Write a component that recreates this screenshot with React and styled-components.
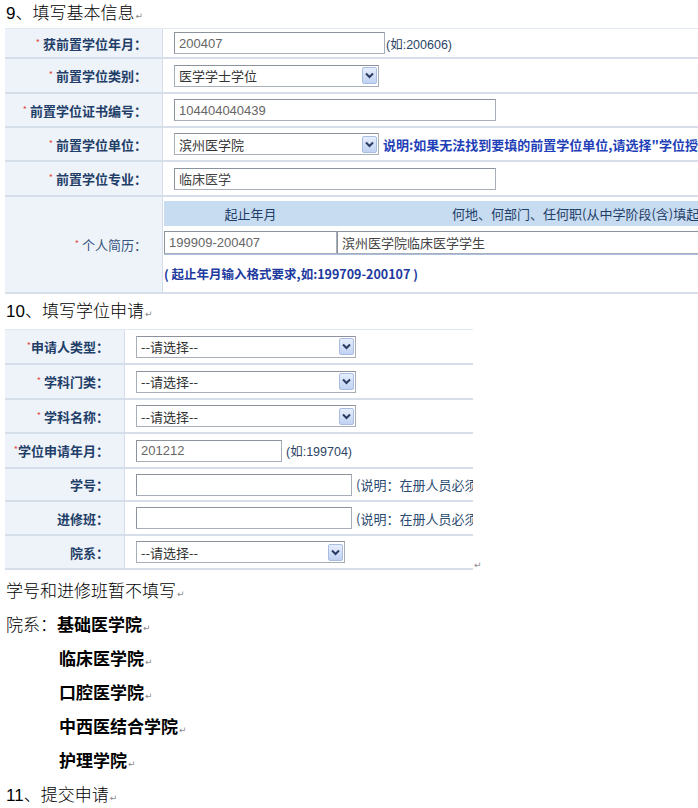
import React from "react";
import styled, { createGlobalStyle } from "styled-components";

const GlobalStyle = createGlobalStyle`
  html, body {
    margin: 0;
    padding: 0;
    overflow: hidden;
    background: #fff;
  }
`;

const Page = styled.div`
  width: 698px;
  height: 808px;
  overflow: hidden;
  font-family: "Liberation Sans", "Noto Sans CJK SC", sans-serif;
  color: #000;
`;

const DocLine = styled.div`
  height: ${(p) => p.$h || 34}px;
  line-height: ${(p) => p.$h || 34}px;
  padding-left: ${(p) => p.$indent || 6}px;
  font-size: 17px;
  white-space: nowrap;
  font-weight: ${(p) => (p.$bold ? "bold" : 300)};
`;

const Strong = styled.span`
  font-weight: bold;
`;

const Pilcrow = styled.span`
  font-family: "DejaVu Sans", sans-serif;
  font-size: 9px;
  font-weight: normal;
  color: #8a8a8a;
  margin-left: 1px;
`;

const TableWrap = styled.div`
  display: flex;
  align-items: flex-end;
  margin-bottom: ${(p) => p.$mb || 0}px;
`;

const FormTable = styled.div`
  width: ${(p) => p.$w}px;
  margin-left: 5px;
  flex: none;
  border-top: 1px solid #e3e9f1;
  font-family: "Noto Sans CJK SC", sans-serif;
`;

const Row = styled.div`
  display: flex;
  height: ${(p) => p.$h}px;
  box-sizing: border-box;
  border-bottom: 2px solid #d5dee9;
`;

const Label = styled.div`
  width: ${(p) => p.$w}px;
  flex: none;
  box-sizing: border-box;
  padding-right: ${(p) => p.$pr}px;
  background: #eef3fa;
  border-right: 1px solid #d3dce8;
  display: flex;
  align-items: center;
  justify-content: flex-end;
  font-size: 13px;
  font-weight: ${(p) => (p.$light ? "normal" : "bold")};
  color: ${(p) => (p.$light ? "#34547c" : "#1f3e68")};
  white-space: nowrap;
`;

const Star = styled.span`
  color: #e2473f;
  font-size: 9px;
  font-weight: normal;
  margin-right: ${(p) => (p.$tight ? 0 : 3)}px;
  position: relative;
  top: -1px;
`;

const Value = styled.div`
  flex: 1;
  min-width: 0;
  display: flex;
  flex-direction: ${(p) => (p.$column ? "column" : "row")};
  align-items: ${(p) => (p.$column ? "stretch" : "center")};
  padding-left: ${(p) => p.$pl}px;
  padding-top: ${(p) => p.$pt || 0}px;
  gap: ${(p) => (p.$gap === undefined ? 4 : p.$gap)}px;
  white-space: nowrap;
  overflow: hidden;
  background: #fff;
`;

const Field = styled.input`
  width: ${(p) => p.$w}px;
  height: ${(p) => p.$h || 22}px;
  flex: none;
  box-sizing: border-box;
  margin: 0;
  border: 1px solid #a7aeb7;
  border-top-color: #8c939d;
  border-left-color: #8c939d;
  padding: 0 4px;
  font-family: "Liberation Sans", "Noto Sans CJK SC", sans-serif;
  font-size: 13px;
  color: ${(p) => p.$color || "#666"};
  background: #fff;
  outline: none;
`;

const SelectBox = styled.div`
  width: ${(p) => p.$w}px;
  height: 22px;
  flex: none;
  box-sizing: border-box;
  border: 1px solid #a7aeb7;
  border-top-color: #8c939d;
  background: #fff;
  display: flex;
  align-items: center;
  justify-content: space-between;
  padding: 0 1px 0 4px;
  font-size: 13px;
  color: #333;
`;

const ArrowBtn = styled.span`
  width: 15px;
  height: 17px;
  box-sizing: border-box;
  border: 1px solid #a9bde2;
  border-radius: 2px;
  background: linear-gradient(#e6eefc, #c0d2f2);
  display: flex;
  align-items: center;
  justify-content: center;
`;

const Hint = styled.span`
  font-size: ${(p) => p.$size || 13}px;
  color: ${(p) => p.$color || "#2c4466"};
  font-weight: ${(p) => (p.$bold ? 600 : "normal")};
  font-family: ${(p) =>
    p.$latin ? '"Liberation Sans", "Noto Sans CJK SC", sans-serif' : '"Noto Sans CJK SC", sans-serif'};
`;

const InnerHead = styled.div`
  display: flex;
  height: 25px;
  align-items: center;
  background: #c7dbf1;
  font-size: 13px;
  color: #1f3e68;
`;

const HeadCell = styled.div`
  width: ${(p) => (p.$w ? `${p.$w}px` : "auto")};
  flex: ${(p) => (p.$w ? "none" : 1)};
  text-align: ${(p) => p.$align || "center"};
  padding-left: ${(p) => p.$pl || 0}px;
`;

const InnerRow = styled.div`
  display: flex;
  height: 25px;
  padding-top: 1px;
  box-sizing: border-box;
  border-bottom: 2px solid #a9c1df;
`;

const FormatNote = styled.div`
  margin-top: 5px;
  font-size: 12.5px;
  color: #1d3a9e;
  font-weight: 600;
`;

function Select({ w, text }) {
  return (
    <SelectBox $w={w}>
      <span>{text}</span>
      <ArrowBtn>
        <svg width="9" height="7" viewBox="0 0 9 7">
          <path d="M1 1.5 L4.5 5 L8 1.5" fill="none" stroke="#2a3c63" strokeWidth="2" />
        </svg>
      </ArrowBtn>
    </SelectBox>
  );
}

function FieldLabel({ w, pr, text, star, tight, light }) {
  return (
    <Label $w={w} $pr={pr} $light={light}>
      {star && <Star $tight={tight}>*</Star>}
      {text}
    </Label>
  );
}

export default function App() {
  return (
    <Page>
      <GlobalStyle />
      <DocLine $h={28}>
        9、填写基本信息<Pilcrow>↵</Pilcrow>
      </DocLine>

      <TableWrap>
        <FormTable $w={720}>
          <Row $h={30}>
            <FieldLabel w={158} pr={15} star text="获前置学位年月：" />
            <Value $pl={11} $gap={1}>
              <Field $w={211} readOnly value="200407" />
              <Hint $size={12.5} $latin>(如:200606)</Hint>
            </Value>
          </Row>
          <Row $h={35}>
            <FieldLabel w={158} pr={15} star text="前置学位类别：" />
            <Value $pl={11}>
              <Select w={205} text="医学学士学位" />
            </Value>
          </Row>
          <Row $h={34}>
            <FieldLabel w={158} pr={15} star text="前置学位证书编号：" />
            <Value $pl={11}>
              <Field $w={322} readOnly value="104404040439" />
            </Value>
          </Row>
          <Row $h={34}>
            <FieldLabel w={158} pr={15} star text="前置学位单位：" />
            <Value $pl={11}>
              <Select w={205} text="滨州医学院" />
              <Hint $color="#1f3fb8" $bold>说明:如果无法找到要填的前置学位单位,请选择"学位授予单位"中的"其他"</Hint>
            </Value>
          </Row>
          <Row $h={35}>
            <FieldLabel w={158} pr={15} star text="前置学位专业：" />
            <Value $pl={11}>
              <Field $w={322} readOnly value="临床医学" $color="#444" />
            </Value>
          </Row>
          <Row $h={97}>
            <FieldLabel w={158} pr={15} star light text="个人简历：" />
            <Value $pl={1} $pt={4} $column>
              <InnerHead>
                <HeadCell $w={173}>起止年月</HeadCell>
                <HeadCell $align="left" $pl={115}>何地、何部门、任何职(从中学阶段(含)填起)</HeadCell>
              </InnerHead>
              <InnerRow>
                <Field $w={173} $h={23} readOnly value="199909-200407" />
                <Field $w={380} $h={23} readOnly value="滨州医学院临床医学学生" $color="#444" />
              </InnerRow>
              <FormatNote>( 起止年月输入格式要求,如:199709-200107 )</FormatNote>
            </Value>
          </Row>
        </FormTable>
      </TableWrap>

      <DocLine $h={35}>
        10、填写学位申请<Pilcrow>↵</Pilcrow>
      </DocLine>

      <TableWrap $mb={5}>
        <FormTable $w={468}>
          <Row $h={35}>
            <FieldLabel w={120} pr={15} star tight text="申请人类型：" />
            <Value $pl={11}>
              <Select w={220} text="--请选择--" />
            </Value>
          </Row>
          <Row $h={35}>
            <FieldLabel w={120} pr={15} star text="学科门类：" />
            <Value $pl={11}>
              <Select w={220} text="--请选择--" />
            </Value>
          </Row>
          <Row $h={34}>
            <FieldLabel w={120} pr={15} star text="学科名称：" />
            <Value $pl={11}>
              <Select w={220} text="--请选择--" />
            </Value>
          </Row>
          <Row $h={35}>
            <FieldLabel w={120} pr={15} star tight text="学位申请年月：" />
            <Value $pl={11}>
              <Field $w={146} readOnly value="201212" />
              <Hint $size={12.5} $latin>(如:199704)</Hint>
            </Value>
          </Row>
          <Row $h={33}>
            <FieldLabel w={120} pr={15} text="学号：" />
            <Value $pl={11}>
              <Field $w={216} readOnly value="" />
              <Hint $color="#2a4a70">(说明：在册人员必须填写)</Hint>
            </Value>
          </Row>
          <Row $h={34}>
            <FieldLabel w={120} pr={15} text="进修班：" />
            <Value $pl={11}>
              <Field $w={216} readOnly value="" />
              <Hint $color="#2a4a70">(说明：在册人员必须填写)</Hint>
            </Value>
          </Row>
          <Row $h={34}>
            <FieldLabel w={120} pr={15} text="院系：" />
            <Value $pl={11}>
              <Select w={209} text="--请选择--" />
            </Value>
          </Row>
        </FormTable>
        <Pilcrow>↵</Pilcrow>
      </TableWrap>

      <DocLine>
        学号和进修班暂不填写<Pilcrow>↵</Pilcrow>
      </DocLine>
      <DocLine>
        院系：<Strong>基础医学院</Strong>
        <Pilcrow>↵</Pilcrow>
      </DocLine>
      <DocLine $indent={59} $bold>
        临床医学院<Pilcrow>↵</Pilcrow>
      </DocLine>
      <DocLine $indent={59} $bold>
        口腔医学院<Pilcrow>↵</Pilcrow>
      </DocLine>
      <DocLine $indent={59} $bold>
        中西医结合学院<Pilcrow>↵</Pilcrow>
      </DocLine>
      <DocLine $indent={59} $bold>
        护理学院<Pilcrow>↵</Pilcrow>
      </DocLine>
      <DocLine>
        11、提交申请<Pilcrow>↵</Pilcrow>
      </DocLine>
    </Page>
  );
}
